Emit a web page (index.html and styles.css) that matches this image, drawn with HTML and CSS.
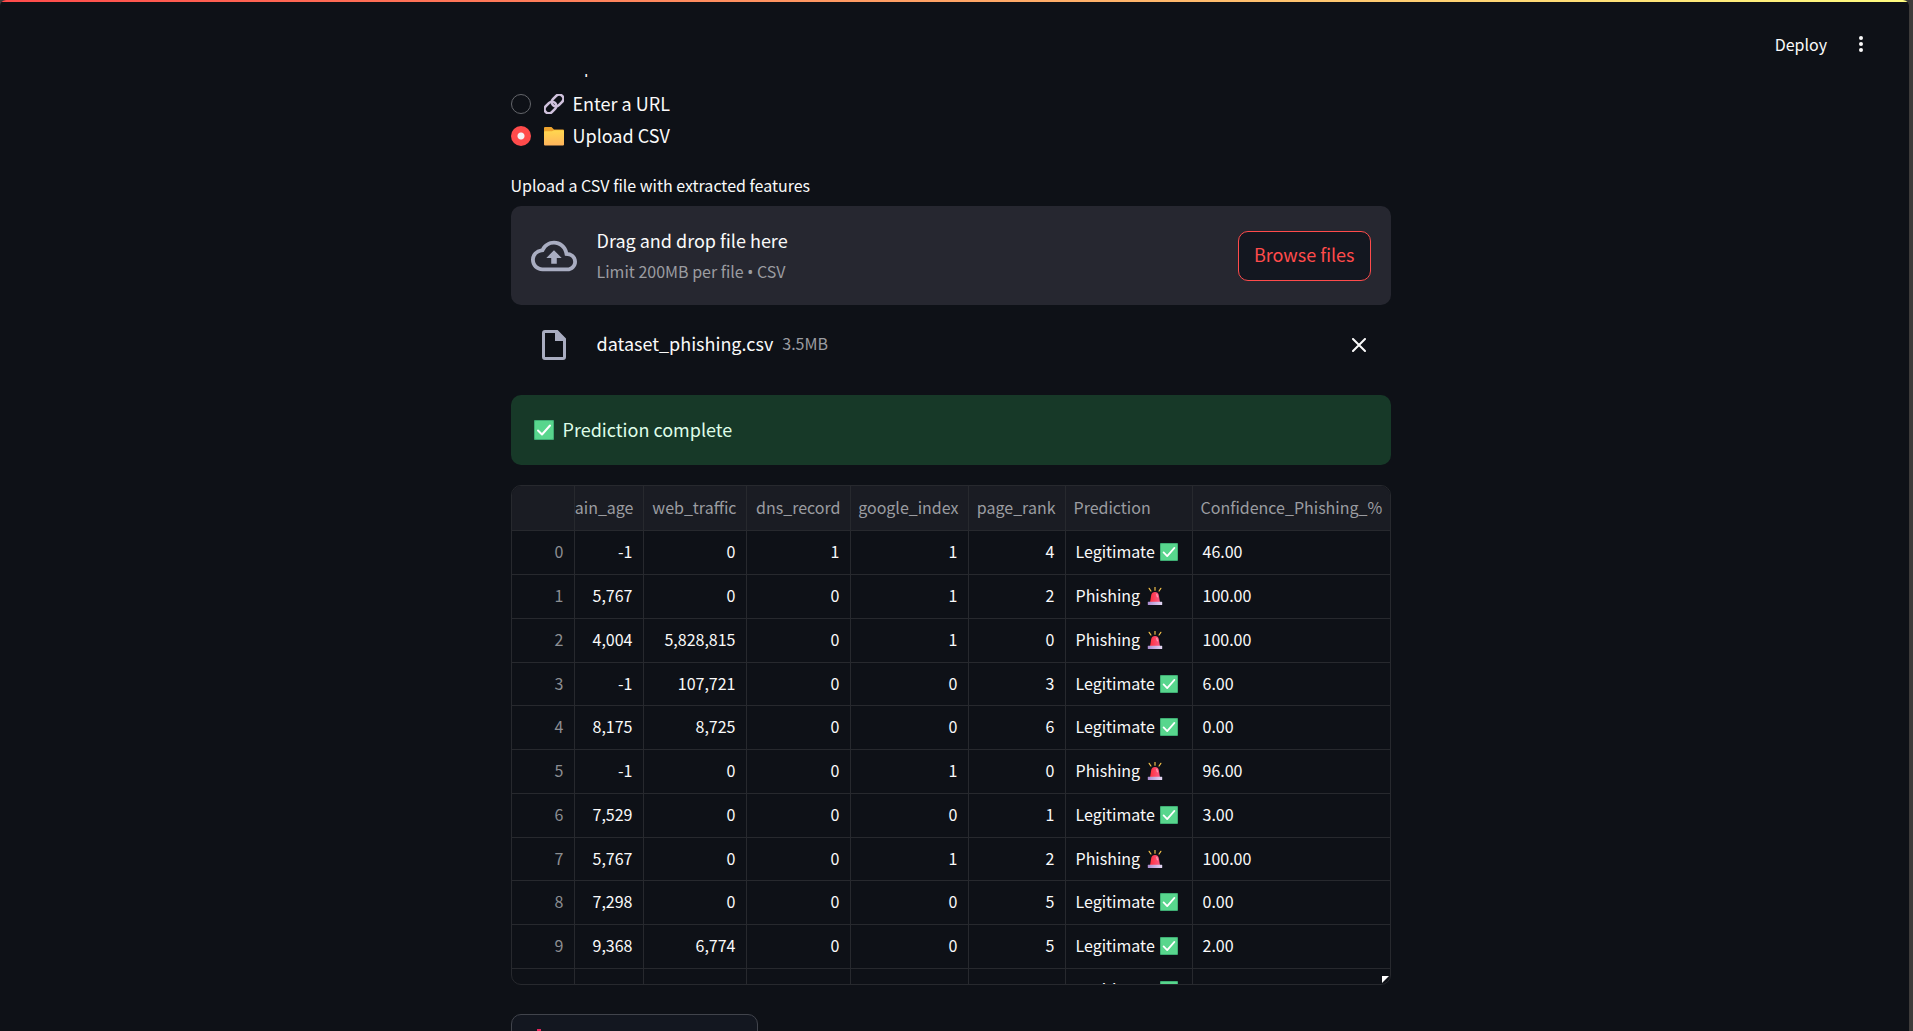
FILE: index.html
```html
<!DOCTYPE html>
<html lang="en">
<head>
<meta charset="utf-8">
<title>Phishing detector</title>
<link rel="stylesheet" href="styles.css">
</head>
<body>
<svg class="defs" aria-hidden="true">
  <defs>
    <linearGradient id="folder-fill" x1="0" y1="0" x2="0" y2="1"><stop offset="0" stop-color="#ffd84f"/><stop offset="1" stop-color="#ffb45c"/></linearGradient>
    <linearGradient id="lamp-fill" x1="0" y1="0" x2="1" y2="0"><stop offset="0" stop-color="#ff2f3c"/><stop offset="1" stop-color="#fb5a86"/></linearGradient>
    <linearGradient id="base-fill" x1="0" y1="0" x2="1" y2="0"><stop offset="0" stop-color="#a98bd0"/><stop offset="1" stop-color="#e4d8f4"/></linearGradient>
  </defs>
  <symbol id="check" viewBox="0 0 20 20">
    <rect width="20" height="20" rx="1" fill="#3fae74"/>
    <rect x="1" y="1" width="18" height="18" rx="1" fill="#58d68d"/>
    <path d="M4 10.500l4 4 8-9" fill="none" stroke="#fff" stroke-width="2" stroke-linecap="round" stroke-linejoin="round"/>
  </symbol>
  <symbol id="siren" viewBox="0 0 18 20">
    <path d="M9 0v3.500M2.500 1.500l2 3M15.500 1.500l-2 3" stroke="#f4c24a" stroke-width="1.300" stroke-linecap="round"/>
    <path d="M3.500 17L4.800 9Q5.500 5.500 9 5.500t4.200 3.500L14.500 17z" fill="url(#lamp-fill)"/>
    <path d="M11 8l.6 3" stroke="#ffc0cf" stroke-width="1" stroke-linecap="round"/>
    <rect x="1" y="16.500" width="16" height="3.500" rx=".6" fill="url(#base-fill)"/>
  </symbol>
  <symbol id="link" viewBox="0 0 20 20">
    <g fill="none" stroke="#cfc1dc" stroke-width="2.600" transform="rotate(-45 10 10)">
      <rect x="-1.500" y="5.800" width="13" height="8.400" rx="4.200"/>
      <rect x="8.500" y="5.800" width="13" height="8.400" rx="4.200"/>
    </g>
  </symbol>
  <symbol id="folder" viewBox="0 0 20 20">
    <path d="M0 2q0-1 1-1h6.500l2.500 2.500h9q1 0 1 1V9H0z" fill="#eda32e"/>
    <path d="M0 6q0-.8 1-.8h7l2-1h9q1 0 1 1V18.500q0 1-1 1H1q-1 0-1-1z" fill="url(#folder-fill)"/>
  </symbol>
  <symbol id="inbox" viewBox="0 0 20 20">
    <path d="M1 9h4v5h10V9h4v10H1z" fill="#8fa8c4"/>
    <path d="M6 0h4v7h3l-5 5-5-5h3z" fill="#e8255c"/>
  </symbol>
</svg>

<div class="app">
  <header class="topbar">
    <button class="deploy" type="button">Deploy</button>
    <button class="menu" type="button" aria-label="Main menu">
      <svg viewBox="0 0 20 20" width="20" height="20"><g fill="#fafafa"><circle cx="10" cy="4" r="2"/><circle cx="10" cy="10" r="2"/><circle cx="10" cy="16" r="2"/></g></svg>
    </button>
  </header>

  <main class="content">
    <div class="choices" role="radiogroup" aria-labelledby="method">
      <div class="clip"><span id="method">Choose input method:</span></div>
      <label class="choice"><input type="radio" name="method"><svg class="emoji"><use href="#link"/></svg><span>Enter a URL</span></label>
      <label class="choice"><input type="radio" name="method" checked><svg class="emoji"><use href="#folder"/></svg><span>Upload CSV</span></label>
    </div>

    <p class="field-label">Upload a CSV file with extracted features</p>
    <section class="dropzone">
      <svg class="cloud" viewBox="0 0 24 24"><path fill="#a9adc1" d="M19.350 10.040A7.490 7.490 0 0 0 12 4C9.110 4 6.600 5.640 5.350 8.040A5.994 5.994 0 0 0 0 14c0 3.310 2.690 6 6 6h13c2.760 0 5-2.240 5-5 0-2.640-2.050-4.780-4.650-4.960zM19 18H6c-2.210 0-4-1.790-4-4 0-2.050 1.530-3.760 3.560-3.970l1.070-.110.5-.950A5.469 5.469 0 0 1 12 6c2.620 0 4.880 1.860 5.390 4.430l.3 1.500 1.530.110A2.980 2.980 0 0 1 22 15c0 1.650-1.350 3-3 3zM8 13h2.550v3h2.900v-3H16l-4-4z"/></svg>
      <div class="drop-text">
        <span class="drop-title">Drag and drop file here</span>
        <span class="muted">Limit 200MB per file <span class="bullet">•</span> CSV</span>
      </div>
      <button class="browse" type="button">Browse files</button>
    </section>

    <div class="file">
      <svg class="doc" viewBox="0 0 24 30"><path d="M1.500 3q0-1.500 1.500-1.500h12L22.500 9v18q0 1.500-1.500 1.500H3q-1.500 0-1.500-1.500z" fill="none" stroke="#a9adc1" stroke-width="3"/><path d="M13 1h2.500L23 8.500V11H13z" fill="#a9adc1"/></svg>
      <div class="file-info">
        <span>dataset_phishing.csv</span>
        <span class="muted">3.5MB</span>
      </div>
      <button class="remove" type="button" aria-label="Remove file">
        <svg viewBox="0 0 14 14" width="14" height="14"><path d="M1 1l12 12M13 1L1 13" stroke="#fafafa" stroke-width="2" stroke-linecap="round"/></svg>
      </button>
    </div>

    <div class="alert" role="alert"><svg class="emoji"><use href="#check"/></svg><span>Prediction complete</span></div>

    <div class="frame">
      <table>
        <colgroup><col class="c-index"><col class="c-age"><col class="c-traffic"><col class="c-dns"><col class="c-google"><col class="c-rank"><col class="c-pred"><col></colgroup>
        <thead>
          <tr><th></th><th class="cut">ain_age</th><th>web_traffic</th><th>dns_record</th><th>google_index</th><th>page_rank</th><th class="text">Prediction</th><th class="text">Confidence_Phishing_%</th></tr>
        </thead>
        <tbody>
          <tr><td>0</td><td>-1</td><td>0</td><td>1</td><td>1</td><td>4</td><td>Legitimate <svg><use href="#check"/></svg></td><td>46.00</td></tr>
          <tr><td>1</td><td>5,767</td><td>0</td><td>0</td><td>1</td><td>2</td><td>Phishing <svg><use href="#siren"/></svg></td><td>100.00</td></tr>
          <tr><td>2</td><td>4,004</td><td>5,828,815</td><td>0</td><td>1</td><td>0</td><td>Phishing <svg><use href="#siren"/></svg></td><td>100.00</td></tr>
          <tr><td>3</td><td>-1</td><td>107,721</td><td>0</td><td>0</td><td>3</td><td>Legitimate <svg><use href="#check"/></svg></td><td>6.00</td></tr>
          <tr><td>4</td><td>8,175</td><td>8,725</td><td>0</td><td>0</td><td>6</td><td>Legitimate <svg><use href="#check"/></svg></td><td>0.00</td></tr>
          <tr><td>5</td><td>-1</td><td>0</td><td>0</td><td>1</td><td>0</td><td>Phishing <svg><use href="#siren"/></svg></td><td>96.00</td></tr>
          <tr><td>6</td><td>7,529</td><td>0</td><td>0</td><td>0</td><td>1</td><td>Legitimate <svg><use href="#check"/></svg></td><td>3.00</td></tr>
          <tr><td>7</td><td>5,767</td><td>0</td><td>0</td><td>1</td><td>2</td><td>Phishing <svg><use href="#siren"/></svg></td><td>100.00</td></tr>
          <tr><td>8</td><td>7,298</td><td>0</td><td>0</td><td>0</td><td>5</td><td>Legitimate <svg><use href="#check"/></svg></td><td>0.00</td></tr>
          <tr><td>9</td><td>9,368</td><td>6,774</td><td>0</td><td>0</td><td>5</td><td>Legitimate <svg><use href="#check"/></svg></td><td>2.00</td></tr>
          <tr><td></td><td></td><td></td><td></td><td></td><td></td><td>Legitimate <svg><use href="#check"/></svg></td><td>0.00</td></tr>
        </tbody>
      </table>
      <svg class="grip" viewBox="0 0 8 8"><path d="M0 0h7L0 7z" fill="#fff"/></svg>
    </div>

    <button class="download" type="button"><svg class="emoji"><use href="#inbox"/></svg><span>Download Results</span></button>
  </main>
</div>
</body>
</html>
```

FILE: styles.css
```css
* { box-sizing: border-box; }

body {
  margin: 0;
  background: #3d3b3a;
  color: #fafafa;
  font: 18px/28px "Noto Sans CJK SC", "Noto Sans", sans-serif;
}

button { font: inherit; color: inherit; cursor: pointer; }
p { margin: 0; }
.defs { position: absolute; width: 0; height: 0; }

.app {
  height: 100vh;
  margin-right: 4px;
  overflow: hidden;
  background: #0e1117;
  border-radius: 6px 6px 0 0;
}

.topbar {
  height: 74px;
  padding: 14px 38px 0 0;
  display: flex;
  justify-content: flex-end;
  align-items: center;
  gap: 24px;
  background: linear-gradient(90deg, #ff4b4b, #fffd80) top / 100% 2px no-repeat;
}
.deploy, .menu, .remove { border: 0; padding: 0; background: none; }
.deploy { font-size: 16px; }
.menu { display: flex; }

.content {
  width: 880px;
  max-width: 100%;
  margin: 0 auto;
  position: relative;
  left: -4px;
}

.clip {
  height: 3px;
  margin-bottom: 11px;
  display: flex;
  align-items: flex-end;
  overflow: hidden;
  font-size: 16px;
  line-height: 20px;
}
.choice { display: flex; align-items: center; height: 32px; }
.choice input {
  appearance: none;
  width: 20px;
  height: 20px;
  margin: 0 13px 0 0;
  border: 1px solid #64666b;
  border-radius: 50%;
}
.choice input:checked { border: 0; background: radial-gradient(circle, #f3f3f6 3px, #ff4b4b 4px); }
.choice span, .alert span { padding-bottom: 2px; }
.emoji { flex: none; width: 20px; height: 20px; margin-right: 9px; }

.field-label { margin-top: 19px; height: 35px; font-size: 16px; line-height: 28px; }

.dropzone {
  height: 99px;
  padding: 0 20px;
  display: flex;
  align-items: center;
  background: #262730;
  border-radius: 10px;
}
.cloud { width: 46px; height: 46px; margin-right: 20px; }
.drop-text { display: flex; flex-direction: column; gap: 3px; flex: 1; }
.muted { color: #9b9ca1; font-size: 16px; }
.bullet { font-family: "Noto Sans", sans-serif; }
.browse {
  height: 50px;
  padding: 0 15px 3px;
  color: #ff4b4b;
  background: #131720;
  border: 1px solid #ff4b4b;
  border-radius: 10px;
}

.file { height: 80px; padding: 0 25px 0 31px; display: flex; align-items: center; }
.doc { width: 24px; height: 30px; margin-right: 31px; }
.file-info { display: flex; align-items: center; gap: 9px; padding-bottom: 4px; }
.remove { display: flex; margin-left: auto; }

.alert {
  height: 70px;
  margin: 10px 0 20px;
  padding: 0 23px;
  display: flex;
  align-items: center;
  color: #dffde9;
  background: #173928;
  border-radius: 10px;
}

.frame {
  position: relative;
  height: 500px;
  overflow: hidden;
  border: 1px solid #27292e;
  border-radius: 10px;
}
table {
  width: 100%;
  table-layout: fixed;
  border-collapse: separate;
  border-spacing: 0;
  font-size: 16px;
  line-height: 24px;
}
th, td {
  height: 44px;
  padding: 0 10px 3px;
  border-right: 1px solid #27292e;
  border-bottom: 1px solid #27292e;
  text-align: right;
  white-space: nowrap;
  font-weight: 400;
}
th { height: 45px; padding: 0 9px 2px 7px; color: #9b9ca1; background: #1a1c23; }
th:last-child, td:last-child { border-right: 0; }
th.text { text-align: left; padding: 0 8px 2px; }
th.cut { padding-left: 0; overflow: hidden; }
tr:nth-child(4n) td { height: 43px; }
td:first-child { color: #8c8e92; }
td:nth-child(n+7) { text-align: left; }
td svg { width: 18px; height: 18px; margin-left: 2px; vertical-align: -3px; }
.c-index { width: 63px; }
.c-age { width: 69px; }
.c-traffic { width: 103px; }
.c-dns { width: 104px; }
.c-google { width: 118px; }
.c-rank { width: 97px; }
.c-pred { width: 127px; }
.grip { position: absolute; right: 0; bottom: 0; width: 8px; height: 8px; }

.download {
  width: 247px;
  height: 50px;
  margin-top: 29px;
  padding: 0 19px;
  display: flex;
  align-items: center;
  background: #131720;
  border: 1px solid #41444c;
  border-radius: 10px;
}
```
